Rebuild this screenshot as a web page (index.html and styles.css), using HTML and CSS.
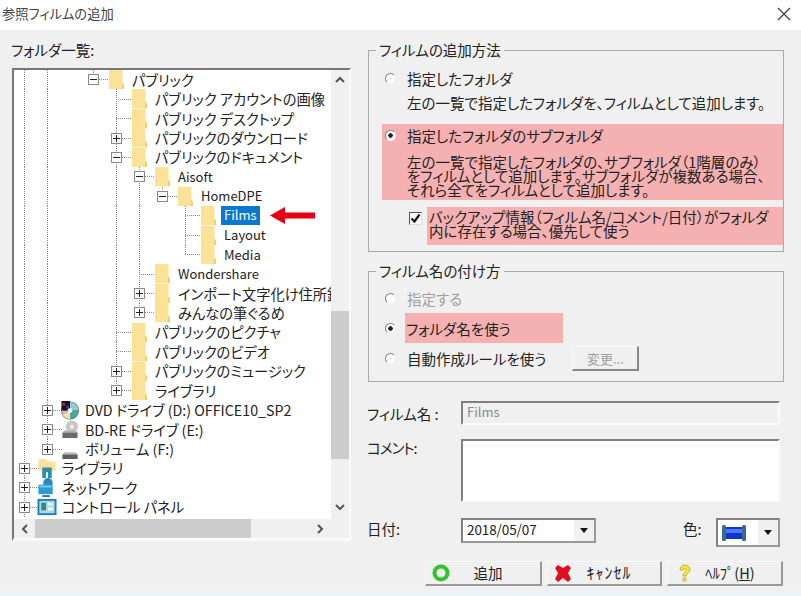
FILE: index.html
```html
<!DOCTYPE html>
<html lang="ja">
<head>
    <meta charset="UTF-8">
    <meta name="viewport" content="width=device-width, initial-scale=1.0">
    <title>参照フィルムの追加</title>
    <link rel="stylesheet" href="styles.css">
</head>
<body>
    <svg class="defs" width="0" height="0">
        <symbol id="folder" viewBox="0 0 15 20" preserveAspectRatio="none">
            <path d="M0 0h13.500v13l1.500 2v5H0z" fill="#fbe296"/>
            <path d="M13.500 13l1.500 2v5h-2v-6z" fill="#f0cf76"/>
        </symbol>
    </svg>

    <div class="dialog">
        <div class="titlebar">
            <span>参照フィルムの追加</span>
            <svg class="close" width="14" height="14" viewBox="0 0 14 14"><path d="M1 1l12 12M13 1L1 13" stroke="#444" stroke-width="1.400"/></svg>
        </div>

        <div class="content">
            <div class="left-col">
                <div class="tree-label">フォルダ一覧:</div>
                <div class="tree">
                    <div class="tree-body">
                        <div class="row"><i class="g on"></i><i class="g on"></i><i class="g"></i><span class="c end"><b class="box"></b></span><svg class="fld"><use href="#folder"/></svg><span>パブリック</span></div>
                        <div class="row"><i class="g on"></i><i class="g on"></i><i class="g"></i><i class="g"></i><span class="c"></span><svg class="fld"><use href="#folder"/></svg><span>パブリック アカウントの画像</span></div>
                        <div class="row"><i class="g on"></i><i class="g on"></i><i class="g"></i><i class="g"></i><span class="c"></span><svg class="fld"><use href="#folder"/></svg><span>パブリック デスクトップ</span></div>
                        <div class="row"><i class="g on"></i><i class="g on"></i><i class="g"></i><i class="g"></i><span class="c"><b class="box plus"></b></span><svg class="fld"><use href="#folder"/></svg><span>パブリックのダウンロード</span></div>
                        <div class="row"><i class="g on"></i><i class="g on"></i><i class="g"></i><i class="g"></i><span class="c"><b class="box"></b></span><svg class="fld"><use href="#folder"/></svg><span>パブリックのドキュメント</span></div>
                        <div class="row"><i class="g on"></i><i class="g on"></i><i class="g"></i><i class="g"></i><i class="g on"></i><span class="c"><b class="box"></b></span><svg class="fld"><use href="#folder"/></svg><span class="lat">Aisoft</span></div>
                        <div class="row"><i class="g on"></i><i class="g on"></i><i class="g"></i><i class="g"></i><i class="g on"></i><i class="g on"></i><span class="c end"><b class="box"></b></span><svg class="fld"><use href="#folder"/></svg><span class="lat">HomeDPE</span></div>
                        <div class="row"><i class="g on"></i><i class="g on"></i><i class="g"></i><i class="g"></i><i class="g on"></i><i class="g on"></i><i class="g"></i><span class="c"></span><svg class="fld"><use href="#folder"/></svg><span class="sel">Films</span>
                            <svg class="arrow" width="45" height="17" viewBox="0 0 45 17"><path d="M0 8.500L15 0v5.500h30v6H15V17z" fill="#e60012"/></svg></div>
                        <div class="row"><i class="g on"></i><i class="g on"></i><i class="g"></i><i class="g"></i><i class="g on"></i><i class="g on"></i><i class="g"></i><span class="c"></span><svg class="fld"><use href="#folder"/></svg><span class="lat">Layout</span></div>
                        <div class="row"><i class="g on"></i><i class="g on"></i><i class="g"></i><i class="g"></i><i class="g on"></i><i class="g on"></i><i class="g"></i><span class="c end"></span><svg class="fld"><use href="#folder"/></svg><span class="lat">Media</span></div>
                        <div class="row"><i class="g on"></i><i class="g on"></i><i class="g"></i><i class="g"></i><i class="g on"></i><span class="c"></span><svg class="fld"><use href="#folder"/></svg><span class="lat">Wondershare</span></div>
                        <div class="row"><i class="g on"></i><i class="g on"></i><i class="g"></i><i class="g"></i><i class="g on"></i><span class="c"><b class="box plus"></b></span><svg class="fld"><use href="#folder"/></svg><span>インポート文字化け住所録</span></div>
                        <div class="row"><i class="g on"></i><i class="g on"></i><i class="g"></i><i class="g"></i><i class="g on"></i><span class="c end"><b class="box plus"></b></span><svg class="fld"><use href="#folder"/></svg><span>みんなの筆ぐるめ</span></div>
                        <div class="row"><i class="g on"></i><i class="g on"></i><i class="g"></i><i class="g"></i><span class="c"></span><svg class="fld"><use href="#folder"/></svg><span>パブリックのピクチャ</span></div>
                        <div class="row"><i class="g on"></i><i class="g on"></i><i class="g"></i><i class="g"></i><span class="c"></span><svg class="fld"><use href="#folder"/></svg><span>パブリックのビデオ</span></div>
                        <div class="row"><i class="g on"></i><i class="g on"></i><i class="g"></i><i class="g"></i><span class="c"><b class="box plus"></b></span><svg class="fld"><use href="#folder"/></svg><span>パブリックのミュージック</span></div>
                        <div class="row"><i class="g on"></i><i class="g on"></i><i class="g"></i><i class="g"></i><span class="c end"><b class="box plus"></b></span><svg class="fld"><use href="#folder"/></svg><span>ライブラリ</span></div>
                        <div class="row"><i class="g on"></i><span class="c"><b class="box plus"></b></span>
                            <svg class="ico" viewBox="0 0 20 20"><circle cx="10" cy="10" r="9.500" fill="#5a5a78"/><path d="M10 10V1a9 9 0 0 1 9 9z" fill="#8fd0c8"/><path d="M10 10h9a9 9 0 0 1-9 9z" fill="#4aa8a0"/><path d="M10 10v9a9 9 0 0 1-8-5z" fill="#f5e6a0"/><path d="M10 10L2 14a9 9 0 0 1-1-4z" fill="#e8a8d8"/><path d="M1 0h9v10H1z" fill="#1a1020"/><path d="M2 2h3v3H2z" fill="#c02040"/><path d="M6 5h3v3H6z" fill="#3040a0"/><circle cx="10" cy="10" r="2.500" fill="#fff"/></svg>
                            <span>DVD ドライブ (D:) OFFICE10_SP2</span></div>
                        <div class="row"><i class="g on"></i><span class="c"><b class="box plus"></b></span>
                            <svg class="ico" viewBox="0 0 20 20"><circle cx="12" cy="7" r="6.500" fill="#c8c8c8"/><circle cx="12" cy="7" r="2" fill="#f4f4f4"/><path d="M2 13h16v6H2z" fill="#6a6a6a"/><path d="M2 13l2-2h12l2 2z" fill="#b0b0b0"/></svg>
                            <span>BD-RE ドライブ (E:)</span></div>
                        <div class="row"><i class="g on"></i><span class="c end"><b class="box plus"></b></span>
                            <svg class="ico" viewBox="0 0 20 20"><path d="M2 15h16v5H2z" fill="#5e5e5e"/><path d="M2 15l2-2h12l2 2z" fill="#bdbdbd"/></svg>
                            <span>ボリューム (F:)</span></div>
                        <div class="row"><span class="c"><b class="box plus"></b></span>
                            <svg class="ico" viewBox="0 0 20 20"><path d="M1 0h8l2 3h8v10H1z" fill="#fbe29a"/><path d="M5 9h10v11h-4v-6H9v6H5z" fill="#2f8fa8"/></svg>
                            <span>ライブラリ</span></div>
                        <div class="row"><span class="c"><b class="box plus"></b></span>
                            <svg class="ico" viewBox="0 0 20 20"><circle cx="11" cy="5" r="5" fill="#2f86c0"/><path d="M1 7h15v10H1z" fill="#2a9ade"/><path d="M2 8h13v2H2z" fill="#7ccaf0"/><path d="M5 18h8v2H5z" fill="#3b6f9c"/></svg>
                            <span>ネットワーク</span></div>
                        <div class="row"><span class="c"><b class="box plus"></b></span>
                            <svg class="ico" viewBox="0 0 20 20"><path d="M0 1h20v17H0z" fill="#1f7fc0"/><path d="M2 3h16v13H2z" fill="#a6dcef"/><path d="M4 5h5v8H4z" fill="#3a8a6a"/><path d="M11 5h5v3h-5zM11 10h5v3h-5z" fill="#fff"/></svg>
                            <span>コントロール パネル</span></div>
                    </div>
                    <div class="vscroll">
                        <svg class="sb-arrow" width="10" height="7" viewBox="0 0 10 7"><path d="M1 6l4-4 4 4" fill="none" stroke="#555" stroke-width="2"/></svg>
                        <div class="vthumb"></div>
                        <svg class="sb-arrow" width="10" height="7" viewBox="0 0 10 7"><path d="M1 1l4 4 4-4" fill="none" stroke="#555" stroke-width="2"/></svg>
                    </div>
                    <div class="hscroll">
                        <svg class="sb-arrow" width="7" height="10" viewBox="0 0 7 10"><path d="M6 1L2 5l4 4" fill="none" stroke="#555" stroke-width="2"/></svg>
                        <div class="hthumb"></div>
                        <svg class="sb-arrow right" width="7" height="10" viewBox="0 0 7 10"><path d="M1 1l4 4-4 4" fill="none" stroke="#555" stroke-width="2"/></svg>
                    </div>
                </div>
            </div>

            <div class="right-col">
                <fieldset class="group group-method">
                    <legend>フィルムの追加方法</legend>
                    <label class="opt"><input type="radio" name="method">指定したフォルダ</label>
                    <p class="desc desc-single">左の一覧で指定したフォルダを、フィルムとして追加します。</p>
                    <div class="pink pink-sub">
                        <label class="opt"><input type="radio" name="method" checked>指定したフォルダのサブフォルダ</label>
                        <p class="desc">左の一覧で指定したフォルダの、サブフォルダ（1階層のみ）<br>をフィルムとして追加します。サブフォルダが複数ある場合、<br>それら全てをフィルムとして追加します。</p>
                    </div>
                    <div class="backup">
                        <span class="check"><svg width="11" height="11" viewBox="0 0 11 11"><path d="M1.500 5.500l3 3 5-7" fill="none" stroke="#111" stroke-width="2.200"/></svg></span>
                        <p class="pink backup-text">バックアップ情報（フィルム名/コメント/日付）がフォルダ<br>内に存在する場合、優先して使う</p>
                    </div>
                </fieldset>

                <fieldset class="group group-name">
                    <legend>フィルム名の付け方</legend>
                    <label class="opt disabled"><input type="radio" name="naming" disabled>指定する</label>
                    <label class="opt"><input type="radio" name="naming" checked><span class="pink pink-name">フォルダ名を使う</span></label>
                    <div class="opt-line">
                        <label class="opt"><input type="radio" name="naming">自動作成ルールを使う</label>
                        <button class="btn-change" disabled>変更...</button>
                    </div>
                </fieldset>

                <div class="field field-film">
                    <label>フィルム名 :</label>
                    <input class="text-input" value="Films" disabled>
                </div>
                <div class="field field-comment">
                    <label class="comment-label">コメント:</label>
                    <textarea class="text-input"></textarea>
                </div>
                <div class="field field-date">
                    <label class="date-label">日付:</label>
                    <div class="date-line">
                        <div class="combo combo-date">
                            <span class="combo-value">2018/05/07</span>
                            <span class="combo-btn"></span>
                        </div>
                        <label class="color-label">色:</label>
                        <div class="combo combo-color">
                            <span class="combo-value">
                                <svg width="24" height="18" viewBox="0 0 24 18"><path d="M3 3h18v12H3z" fill="#1034d0"/><path d="M4 5h16v4H4z" fill="#4f78ff"/><rect x="0" y="1" width="4" height="16" rx="1.500" fill="#3a6a8a"/><rect x="20" y="1" width="4" height="16" rx="1.500" fill="#3a6a8a"/></svg>
                            </span>
                            <span class="combo-btn"></span>
                        </div>
                    </div>
                </div>

                <div class="actions">
                    <button class="action">
                        <svg width="18" height="18" viewBox="0 0 18 18"><circle cx="9" cy="9" r="6.500" fill="none" stroke="#2fc42f" stroke-width="4"/></svg>
                        <span>追加</span>
                    </button>
                    <button class="action">
                        <svg width="18" height="17" viewBox="0 0 18 17"><path d="M1 3l3-3 5 3 5-3 3 3-3 5 3 6-3 3-5-4-5 4-3-3 3-6z" fill="#e01020"/></svg>
                        <span class="half">ｷｬﾝｾﾙ</span>
                    </button>
                    <button class="action">
                        <svg width="16" height="18" viewBox="0 0 16 18"><path d="M3 6a5 5 0 0 1 10 0c0 3-4 3-4 6H6c0-4 3-4 3-6a1 1 0 0 0-3 0z" fill="#f2e63a" stroke="#b5a820" stroke-width=".8"/><circle cx="7.500" cy="15.500" r="1.800" fill="#f2e63a" stroke="#b5a820" stroke-width=".8"/></svg>
                        <span>ﾍﾙﾌﾟ(<u>H</u>)</span>
                    </button>
                </div>
            </div>
        </div>
    </div>
</body>
</html>
```

FILE: styles.css
```css
* {
    box-sizing: border-box;
}
body {
    margin: 0;
    background-color: #eaf4f8;
    color: #222;
    font-family: "Noto Sans CJK JP", "Noto Sans", sans-serif;
    font-size: 14.500px;
    font-feature-settings: "palt";
}
.defs {
    display: block;
    height: 0;
}
.dialog {
    width: 801px;
    height: 591px;
    background-color: #f0f0f0;
    overflow: hidden;
}
.titlebar {
    display: flex;
    align-items: center;
    justify-content: space-between;
    height: 30px;
    padding: 0 10px 3px 2px;
    background-color: white;
    color: #444;
    font-size: 13.300px;
}
.content {
    display: flex;
    padding-left: 11px;
}

/* left side: folder tree */
.left-col {
    width: 340px;
    flex: none;
}
.tree-label {
    height: 20px;
    margin: 10px 0 1px;
    line-height: 20px;
}
.tree {
    display: grid;
    grid-template-columns: 1fr 18px;
    grid-template-rows: 449px 19px;
    width: 339px;
    height: 473px;
    margin: 8px 0 0 1px;
    border-top: 2px solid #777;
    border-left: 2px solid #777;
    border-right: 2px solid #fafafa;
    border-bottom: 3px solid #fafafa;
}
.tree-body {
    background-color: white;
    overflow: hidden;
    white-space: nowrap;
    font-size: 14.250px;
}
.row {
    display: flex;
    align-items: center;
    height: 19.450px;
}
.row > span {
    margin-bottom: 1px;
}
.lat {
    font-size: 13px;
}
.g {
    width: 23px;
    flex: none;
    align-self: stretch;
}
.g.on {
    background: linear-gradient(#888 50%, transparent 50%) 10px 0 / 1px 2px repeat-y;
}
.row > .c {
    display: flex;
    align-items: center;
    width: 26px;
    flex: none;
    align-self: stretch;
    margin: 0;
    background:
        linear-gradient(white, white) 0 50% / 10px 1px no-repeat,
        linear-gradient(90deg, #888 50%, transparent 50%) 0 50% / 2px 1px repeat-x,
        linear-gradient(#888 50%, transparent 50%) 10px 0 / 1px 2px repeat-y;
}
.row > .c.end {
    background:
        linear-gradient(white, white) 0 50% / 10px 1px no-repeat,
        linear-gradient(90deg, #888 50%, transparent 50%) 0 50% / 2px 1px repeat-x,
        linear-gradient(white, white) 10px 100% / 1px 50% no-repeat,
        linear-gradient(#888 50%, transparent 50%) 10px 0 / 1px 2px repeat-y;
}
.box {
    width: 11px;
    height: 11px;
    margin-left: 5px;
    border: 1px solid #888;
    background: linear-gradient(#222, #222) center / 7px 1px no-repeat, white;
}
.box.plus {
    background:
        linear-gradient(#222, #222) center / 7px 1px no-repeat,
        linear-gradient(#222, #222) center / 1px 7px no-repeat,
        white;
}
.fld {
    width: 15px;
    height: 19.450px;
    flex: none;
    margin-right: 8px;
}
.ico {
    width: 20px;
    height: 19px;
    flex: none;
    margin: 0 5px 0 -3px;
}
.row > .sel {
    height: 19px;
    margin: 0 0 0 -3px;
    padding: 0 3px;
    background-color: #0a78d2;
    color: white;
    font-size: 13px;
    line-height: 18px;
}
.arrow {
    flex: none;
    margin-left: 10px;
}
.vscroll {
    display: flex;
    flex-direction: column;
    align-items: center;
    background-color: #f0f0f0;
}
.sb-arrow {
    flex: none;
}
.vscroll .sb-arrow:first-child {
    margin-top: 6px;
}
.vscroll .sb-arrow:last-child {
    margin-top: 45px;
}
.vthumb {
    width: 100%;
    height: 148px;
    margin-top: 228px;
    background-color: #cdcdcd;
}
.hscroll {
    display: flex;
    align-items: center;
    background-color: #f0f0f0;
}
.hscroll .sb-arrow {
    margin-left: 7px;
}
.hthumb {
    width: 216px;
    height: 100%;
    margin-left: 7px;
    background-color: #cdcdcd;
}
.hscroll .sb-arrow.right {
    margin-left: 66px;
}

/* right side: options and fields */
.right-col {
    width: 416px;
    margin: 12px 0 0 17px;
}
.group {
    margin: 0;
    padding: 0;
    border: 1px solid #aaa;
}
.group legend {
    margin-left: 7px;
    padding: 0 3px;
    line-height: 16px;
}
.group-method {
    height: 210px;
}
.group-name {
    height: 119px;
    margin-top: 11px;
}
.opt {
    display: flex;
    align-items: center;
    height: 20px;
    padding-left: 16px;
}
.group-method > .opt {
    margin-top: 10px;
}
.opt input {
    appearance: none;
    width: 11px;
    height: 11px;
    flex: none;
    margin: 0 11px 0 0;
    border-radius: 50%;
    border: 1.500px solid;
    border-color: #808080 #f4f4f4 #f4f4f4 #808080;
    background-color: white;
}
.opt input:checked {
    background: radial-gradient(circle, #222 2px, white 2.500px);
}
.opt.disabled {
    color: #a0a0a0;
}
.desc {
    margin: 0;
    padding-left: 38px;
    line-height: 14px;
    white-space: nowrap;
}
.desc-single {
    margin-top: 8px;
}
.pink {
    background-color: #f5b1b1;
}
.pink-sub {
    height: 76px;
    margin: 14px 0 0 13px;
    padding-top: 1px;
}
.pink-sub .opt {
    padding-left: 3px;
}
.pink-sub .desc {
    margin-top: 10px;
    padding-left: 25px;
}
.backup {
    display: flex;
    align-items: flex-start;
    margin: 7px 0 0 40px;
}
.check {
    display: flex;
    width: 13px;
    height: 13px;
    flex: none;
    margin: 5px 5px 0 0;
    border: 1px solid #555;
    border-right-color: #ddd;
    border-bottom-color: #ddd;
    background-color: white;
}
.backup-text {
    flex: 1;
    height: 38px;
    margin: 0;
    padding: 3px 0 0 2px;
    line-height: 14px;
    white-space: nowrap;
}
.group-name .opt {
    margin-top: 10px;
}
.group-name legend + .opt {
    margin-top: 9px;
}
.pink-name {
    display: flex;
    align-items: center;
    width: 158px;
    height: 30px;
    flex: none;
    margin-left: -2px;
    padding-left: 1px;
}
.opt-line {
    display: flex;
    align-items: center;
    margin-top: 8px;
}
.opt-line .opt {
    margin: 0;
}
.btn-change {
    width: 67px;
    height: 25px;
    margin-left: 26px;
    border: 1px solid #f8f8f8;
    border-right: 2px solid #888;
    border-bottom: 2px solid #888;
    background-color: #f0f0f0;
    color: #a0a0a0;
    font: inherit;
    font-size: 13px;
}
.field {
    display: grid;
    grid-template-columns: 94px 319px;
    margin-left: -1px;
}
.field-film {
    align-items: center;
    margin-top: 19px;
}
.field-comment {
    margin-top: 14px;
}
.field-date {
    grid-template-rows: 29px;
    align-items: start;
    margin-top: 16px;
}
.comment-label {
    letter-spacing: -1px;
    line-height: 18px;
}
.date-label {
    line-height: 20px;
    margin-top: 1px;
}
.text-input {
    display: block;
    width: 100%;
    padding: 0 4px;
    border: 2px solid #fafafa;
    border-top-color: #808080;
    border-left-color: #808080;
    background-color: white;
    color: #222;
    font: inherit;
    resize: none;
    outline: none;
}
.field-film .text-input {
    height: 24px;
    padding-bottom: 4px;
    background-color: #f0f0f0;
    color: #8a8a8a;
    font-size: 13px;
}
.field-comment .text-input {
    height: 63px;
}
.date-line {
    display: flex;
    align-items: flex-start;
}
.combo {
    display: flex;
    flex: none;
    border: 2px solid #808080;
    border-right-color: #999;
    border-bottom-color: #999;
    background-color: white;
}
.combo-date {
    width: 135px;
    height: 25px;
}
.combo-date .combo-value {
    padding-bottom: 3px;
}
.combo-color {
    width: 64px;
    height: 29px;
}
.combo-value {
    flex: 1;
    display: flex;
    align-items: center;
    padding-left: 4px;
    font-size: 13.500px;
    letter-spacing: -0.100px;
}
.combo-btn {
    display: flex;
    align-items: center;
    justify-content: center;
    width: 20px;
    flex: none;
    background-color: #f0f0f0;
}
.combo-btn::after {
    content: "";
    border-top: 5px solid #111;
    border-left: 4.500px solid transparent;
    border-right: 4.500px solid transparent;
}
.color-label {
    width: 34px;
    margin-left: 87px;
    line-height: 20px;
    margin-top: 1px;
}
.actions {
    display: grid;
    grid-template-columns: 117px 115px 116px;
    justify-content: end;
    column-gap: 5px;
    margin: 14px 1px 0 0;
}
.action {
    display: flex;
    align-items: center;
    height: 25px;
    padding: 0 14px 0 6px;
    border: 1px solid #f8f8f8;
    border-right: 2px solid #999;
    border-bottom: 2px solid #999;
    background-color: #f0f0f0;
    color: #222;
    font: inherit;
}
.action:last-child {
    padding-left: 9px;
}
.action span {
    flex: 1;
    margin-bottom: 2px;
    text-align: center;
}
.action .half {
    font-size: 16px;
    letter-spacing: 1px;
}
```
